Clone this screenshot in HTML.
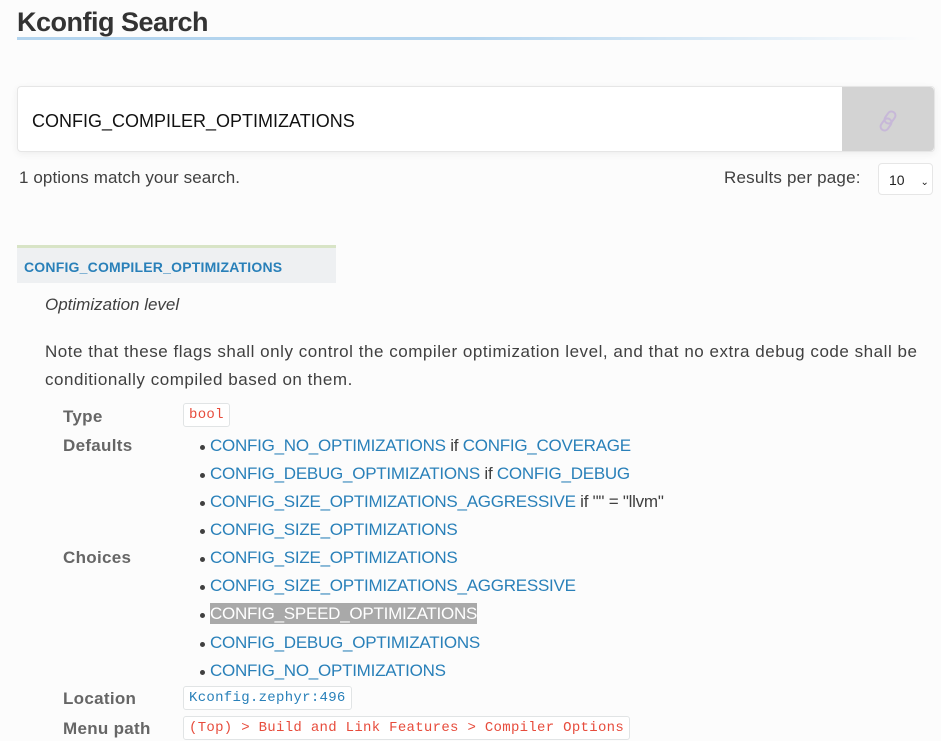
<!DOCTYPE html>
<html><head><style>
body{margin:0;background:#fcfcfc;font-family:"Liberation Sans",sans-serif;color:#404040;width:941px;height:741px;overflow:hidden;position:relative}
.a{position:absolute;white-space:nowrap}
h1{position:absolute;left:17px;top:7px;margin:0;font-size:27px;font-weight:bold;color:#333;letter-spacing:-0.5px}
.ul{position:absolute;left:17px;top:37px;width:905px;height:3px;background:linear-gradient(90deg,#b3d4ee 0%,#b3d4ee 50%,rgba(179,212,238,0) 100%)}
.search{position:absolute;left:17px;top:86px;width:918px;height:66px;background:#fff;border:1px solid #e6e6e6;border-radius:4px;box-shadow:0 2px 8px rgba(0,0,0,0.06);box-sizing:border-box}
.btn{position:absolute;right:0;top:0;width:92px;height:64px;background:#d3d3d3;border-radius:0 4px 4px 0}
a,.l{color:#2980b9}
code{font-family:"Liberation Mono",monospace;font-size:14px;color:#e74c3c;background:#fff;border:1px solid #e1e4e5;padding:3px 5px;border-radius:3px;letter-spacing:0.3px}
.lab{position:absolute;left:63px;font-weight:bold;color:#666;font-size:17px;letter-spacing:0.3px}
.li{position:absolute;left:200px;font-size:17px;color:#404040;white-space:nowrap;letter-spacing:-0.25px}
.li:before{content:"";position:absolute;left:0;top:9px;width:5px;height:5px;border-radius:50%;background:#404040}
.li span{margin-left:10px}
</style></head><body>
<h1>Kconfig Search</h1>
<div class="ul"></div>
<div class="search">
<div class="a" style="left:14px;top:24px;font-size:18px;color:#111;letter-spacing:0px">CONFIG_COMPILER_OPTIMIZATIONS</div>
<div class="btn"><svg style="position:absolute;left:33px;top:21px" width="26" height="26" viewBox="0 0 26 26" fill="none" stroke="#c7b8d8" stroke-width="2"><rect x="11" y="3" width="8" height="13" rx="4" transform="rotate(35 15 9.5)"/><rect x="7" y="10" width="8" height="13" rx="4" transform="rotate(35 11 16.5)"/></svg></div>
</div>
<div class="a" style="left:19px;top:168px;font-size:17px;letter-spacing:0.1px">1 options match your search.</div>
<div class="a" style="left:724px;top:168px;font-size:17px;letter-spacing:0.2px">Results per page:</div>
<div class="a" style="left:878px;top:163px;width:55px;height:32px;background:#fff;border:1px solid #e6e6e6;border-radius:4px;box-sizing:border-box;font-size:14px;padding:8px 0 0 10px;color:#222">10 <span style="margin-left:12px;font-size:10px">&#8964;</span></div>
<div class="a" style="left:17px;top:245px;width:319px;height:38px;background:#eef0f2;border-top:3px solid #d8e4c6;box-sizing:border-box"></div>
<div class="a l" style="left:24px;top:259px;font-size:14px;font-weight:bold;letter-spacing:0.2px">CONFIG_COMPILER_OPTIMIZATIONS</div>
<div class="a" style="left:45px;top:295px;font-size:17px;font-style:italic;letter-spacing:0px">Optimization level</div>
<div class="a" style="left:45px;top:338px;font-size:17px;line-height:28px;letter-spacing:0.53px">Note that these flags shall only control the compiler optimization level, and that no extra debug code shall be<br>conditionally compiled based on them.</div>
<div class="lab" style="top:407px">Type</div>
<div class="a" style="left:183px;top:405px"><code>bool</code></div>
<div class="lab" style="top:436px">Defaults</div>
<div class="li" style="top:436px"><span><a>CONFIG_NO_OPTIMIZATIONS</a> if <a>CONFIG_COVERAGE</a></span></div>
<div class="li" style="top:464px"><span><a>CONFIG_DEBUG_OPTIMIZATIONS</a> if <a>CONFIG_DEBUG</a></span></div>
<div class="li" style="top:492px"><span><a>CONFIG_SIZE_OPTIMIZATIONS_AGGRESSIVE</a> if "" = "llvm"</span></div>
<div class="li" style="top:520px"><span><a>CONFIG_SIZE_OPTIMIZATIONS</a></span></div>
<div class="lab" style="top:548px">Choices</div>
<div class="li" style="top:548px"><span><a>CONFIG_SIZE_OPTIMIZATIONS</a></span></div>
<div class="li" style="top:576px"><span><a>CONFIG_SIZE_OPTIMIZATIONS_AGGRESSIVE</a></span></div>
<div class="li" style="top:604px"><span style="background:#a9a9a9;color:#fff;padding:1px 0">CONFIG_SPEED_OPTIMIZATIONS</span></div>
<div class="li" style="top:633px"><span><a>CONFIG_DEBUG_OPTIMIZATIONS</a></span></div>
<div class="li" style="top:661px"><span><a>CONFIG_NO_OPTIMIZATIONS</a></span></div>
<div class="lab" style="top:689px">Location</div>
<div class="a" style="left:183px;top:688px"><code style="color:#2980b9">Kconfig.zephyr:496</code></div>
<div class="lab" style="top:719px">Menu path</div>
<div class="a" style="left:183px;top:718px"><code>(Top) &gt; Build and Link Features &gt; Compiler Options</code></div>
</body></html>
